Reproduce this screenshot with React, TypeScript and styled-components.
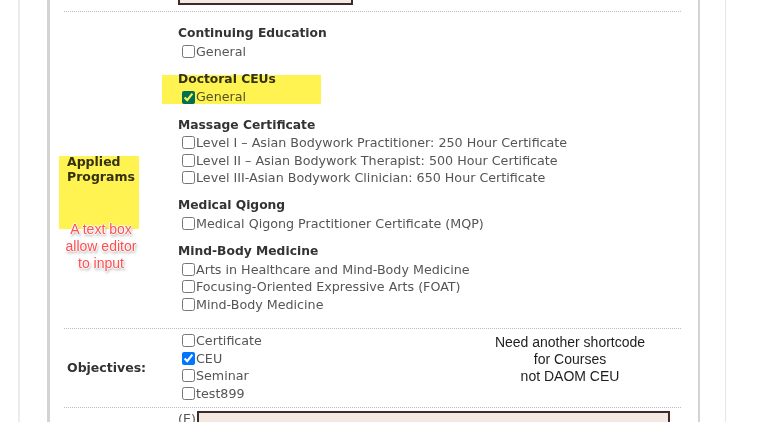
import React from 'react';
import styled, { createGlobalStyle } from 'styled-components';

const GlobalStyle = createGlobalStyle`
  html, body {
    margin: 0;
    padding: 0;
    background: #ffffff;
    overflow: hidden;
  }
  body {
    font-family: "DejaVu Sans", Verdana, sans-serif;
  }
  * {
    box-sizing: border-box;
  }
`;

const Frame = styled.div`
  margin-left: 18px;
  width: 708px;
  height: 422px;
  padding-left: 27px;
  border-left: 2px solid #ececec;
  border-right: 1px solid #e6e6e6;
`;

const Panel = styled.div`
  width: 653px;
  height: 100%;
  padding: 0 17px 0 14px;
  border-left: 3px solid #d3d3d3;
  border-right: 2px solid #d3d3d3;
`;

const TopField = styled.div`
  margin-left: 114px;
  width: 175px;
  height: 5px;
  margin-bottom: 6px;
  background: #f3e8e2;
  border: 2px solid #3b2b2b;
  border-top: none;
`;

const Row = styled.div<{ $top: number; $bottom: number }>`
  position: relative;
  display: grid;
  grid-template-columns: 114px 1fr;
  border-top: 1px dotted #bdbdbd;
  padding: ${({ $top }) => $top}px 0 ${({ $bottom }) => $bottom}px;
`;

const LabelCell = styled.div`
  display: flex;
  align-items: center;
`;

const Label = styled.div`
  position: relative;
  padding-left: 3px;
  font-size: 12.5px;
  line-height: 15px;
  font-weight: bold;
  color: #333333;
`;

const Marker = styled.div<{ $w: number; $h: number; $x: number; $y: number }>`
  position: absolute;
  left: ${({ $x }) => $x}px;
  top: ${({ $y }) => $y}px;
  width: ${({ $w }) => $w}px;
  height: ${({ $h }) => $h}px;
  background: #fff352;
  mix-blend-mode: multiply;
  pointer-events: none;
`;

const Note = styled.div<{ $red?: boolean }>`
  position: absolute;
  text-align: center;
  font-family: "Liberation Sans", Arial, sans-serif;
  font-size: 14px;
  line-height: 17px;
  font-weight: normal;
  white-space: nowrap;
  color: ${({ $red }) => ($red ? '#ff4f4f' : '#1e1e1e')};
  text-shadow: ${({ $red }) =>
    $red
      ? '1px 0 1px #fff, -1px 0 1px #fff, 0 1px 1px #fff, 0 -1px 1px #fff, 1px 2px 3px rgba(0,0,0,0.45)'
      : 'none'};
`;

const Content = styled.div`
  font-size: 12.7px;
  line-height: 17.5px;
  color: #555555;
`;

const Group = styled.div`
  position: relative;
  & + & {
    margin-top: 10.75px;
  }
`;

const Heading = styled.div`
  font-size: 12.3px;
  font-weight: bold;
  color: #333333;
`;

const Option = styled.label`
  display: flex;
  align-items: center;
  height: 17.5px;
  white-space: nowrap;
`;

const Box = styled.input`
  width: 13px;
  height: 13px;
  margin: 0 1px 0 4px;
`;

const FieldLine = styled.div`
  display: flex;
  align-items: flex-start;
  gap: 1px;
`;

const FieldTag = styled.span`
  line-height: 14px;
  margin-top: 1px;
`;

const Field = styled.div`
  width: 473px;
  height: 30px;
  background: #f3e8e2;
  border: 2px solid #3b2b2b;
  border-bottom: none;
`;

type Program = { title: string; items: { name: string; checked?: boolean }[]; mark?: boolean };

const programs: Program[] = [
  { title: 'Continuing Education', items: [{ name: 'General' }] },
  { title: 'Doctoral CEUs', items: [{ name: 'General', checked: true }], mark: true },
  {
    title: 'Massage Certificate',
    items: [
      { name: 'Level I – Asian Bodywork Practitioner: 250 Hour Certificate' },
      { name: 'Level II – Asian Bodywork Therapist: 500 Hour Certificate' },
      { name: 'Level III-Asian Bodywork Clinician: 650 Hour Certificate' }
    ]
  },
  { title: 'Medical Qigong', items: [{ name: 'Medical Qigong Practitioner Certificate (MQP)' }] },
  {
    title: 'Mind-Body Medicine',
    items: [
      { name: 'Arts in Healthcare and Mind-Body Medicine' },
      { name: 'Focusing-Oriented Expressive Arts (FOAT)' },
      { name: 'Mind-Body Medicine' }
    ]
  }
];

const objectives = [
  { name: 'Certificate' },
  { name: 'CEU', checked: true },
  { name: 'Seminar' },
  { name: 'test899' }
];

function Check({ name, checked }: { name: string; checked?: boolean }) {
  return (
    <Option>
      <Box type="checkbox" defaultChecked={checked} />
      {name}
    </Option>
  );
}

export default function App() {
  return (
    <>
      <GlobalStyle />
      <Frame>
        <Panel>
          <TopField />

          <Row $top={13} $bottom={15}>
            <LabelCell>
              <Label>
                Applied
                <br />
                Programs
                <Marker $x={-5} $y={2} $w={80} $h={73} />
                <Note $red style={{ left: -4, top: 67, width: 82 }}>
                  A text box
                  <br />
                  allow editor
                  <br />
                  to input
                </Note>
              </Label>
            </LabelCell>
            <Content>
              {programs.map((p) => (
                <Group key={p.title}>
                  <Heading>{p.title}</Heading>
                  {p.items.map((it) => (
                    <Check key={it.name} name={it.name} checked={it.checked} />
                  ))}
                  {p.mark && <Marker $x={-16} $y={4} $w={159} $h={29} />}
                </Group>
              ))}
            </Content>
          </Row>

          <Row $top={3} $bottom={5}>
            <LabelCell>
              <Label>Objectives:</Label>
            </LabelCell>
            <Content>
              {objectives.map((o) => (
                <Check key={o.name} name={o.name} checked={o.checked} />
              ))}
            </Content>
            <Note style={{ left: 416, top: 5, width: 180 }}>
              Need another shortcode
              <br />
              for Courses
              <br />
              not DAOM CEU
            </Note>
          </Row>

          <Row $top={3} $bottom={0}>
            <LabelCell />
            <Content>
              <FieldLine>
                <FieldTag>(E)</FieldTag>
                <Field />
              </FieldLine>
            </Content>
          </Row>
        </Panel>
      </Frame>
    </>
  );
}
